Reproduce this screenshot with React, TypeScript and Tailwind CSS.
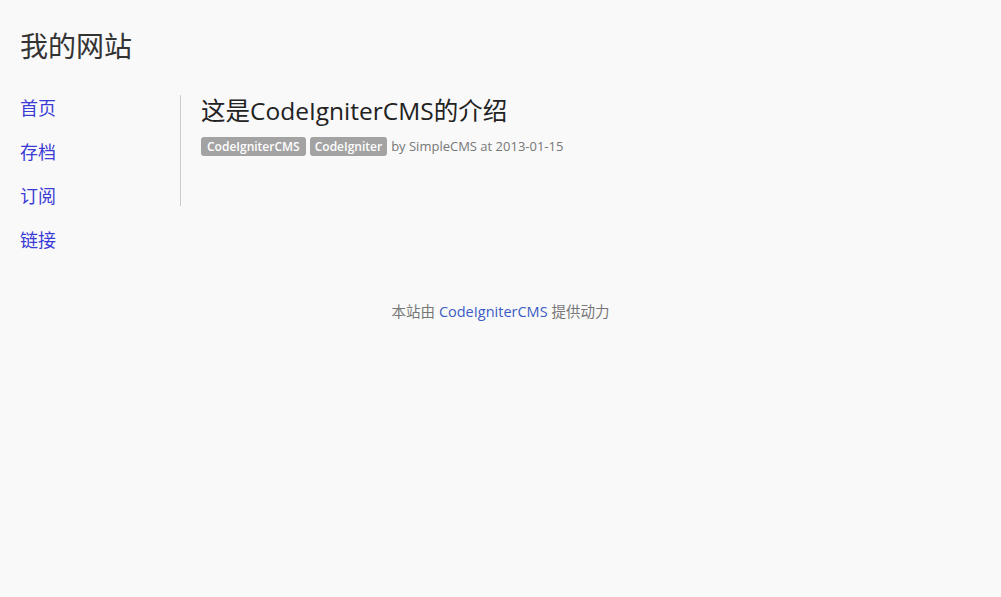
import React from 'react';

const links = ['首页', '存档', '订阅', '链接'];

const App = () => {
    return (
        <div className="min-h-screen bg-[#f9f9f9] text-[#333] font-['Open_Sans','Noto_Sans_CJK_SC',sans-serif]">
            {/* Header */}
            <header className="px-5 pt-[28px]">
                <h1 className="text-[28px] leading-[36px] text-[#333]">我的网站</h1>
            </header>

            <div className="flex px-5 mt-[31px]">
                {/* Sidebar */}
                <ul className="w-[160px] flex flex-col">
                    {links.map((l) => (
                        <li key={l} className="h-[44px] text-[18px] leading-[26px]">
                            <a href="#" className="text-[#3b3bd6]">{l}</a>
                        </li>
                    ))}
                </ul>

                {/* Post */}
                <div className="border-l border-[#ccc] pl-5 h-[111px]">
                    <h2 className="text-[24.5px] leading-[30px] text-[#222] mt-[1px]">这是CodeIgniterCMS的介绍</h2>
                    <div className="flex items-center gap-[4px] mt-[11px] text-[12px]">
                        <span className="bg-[#a3a3a3] text-white font-semibold rounded-[3px] px-[6px] leading-[19px]">CodeIgniterCMS</span>
                        <span className="bg-[#a3a3a3] text-white font-semibold rounded-[3px] px-[5px] leading-[19px]">CodeIgniter</span>
                        <span className="text-[#777] text-[13px]">by SimpleCMS at 2013-01-15</span>
                    </div>
                </div>
            </div>

            {/* Footer */}
            <footer className="text-center text-[14.5px] text-[#777] mt-[30px]">
                本站由 <a href="#" className="text-[#3b5cc4]">CodeIgniterCMS</a> 提供动力
            </footer>
        </div>
    );
};

export default App;
